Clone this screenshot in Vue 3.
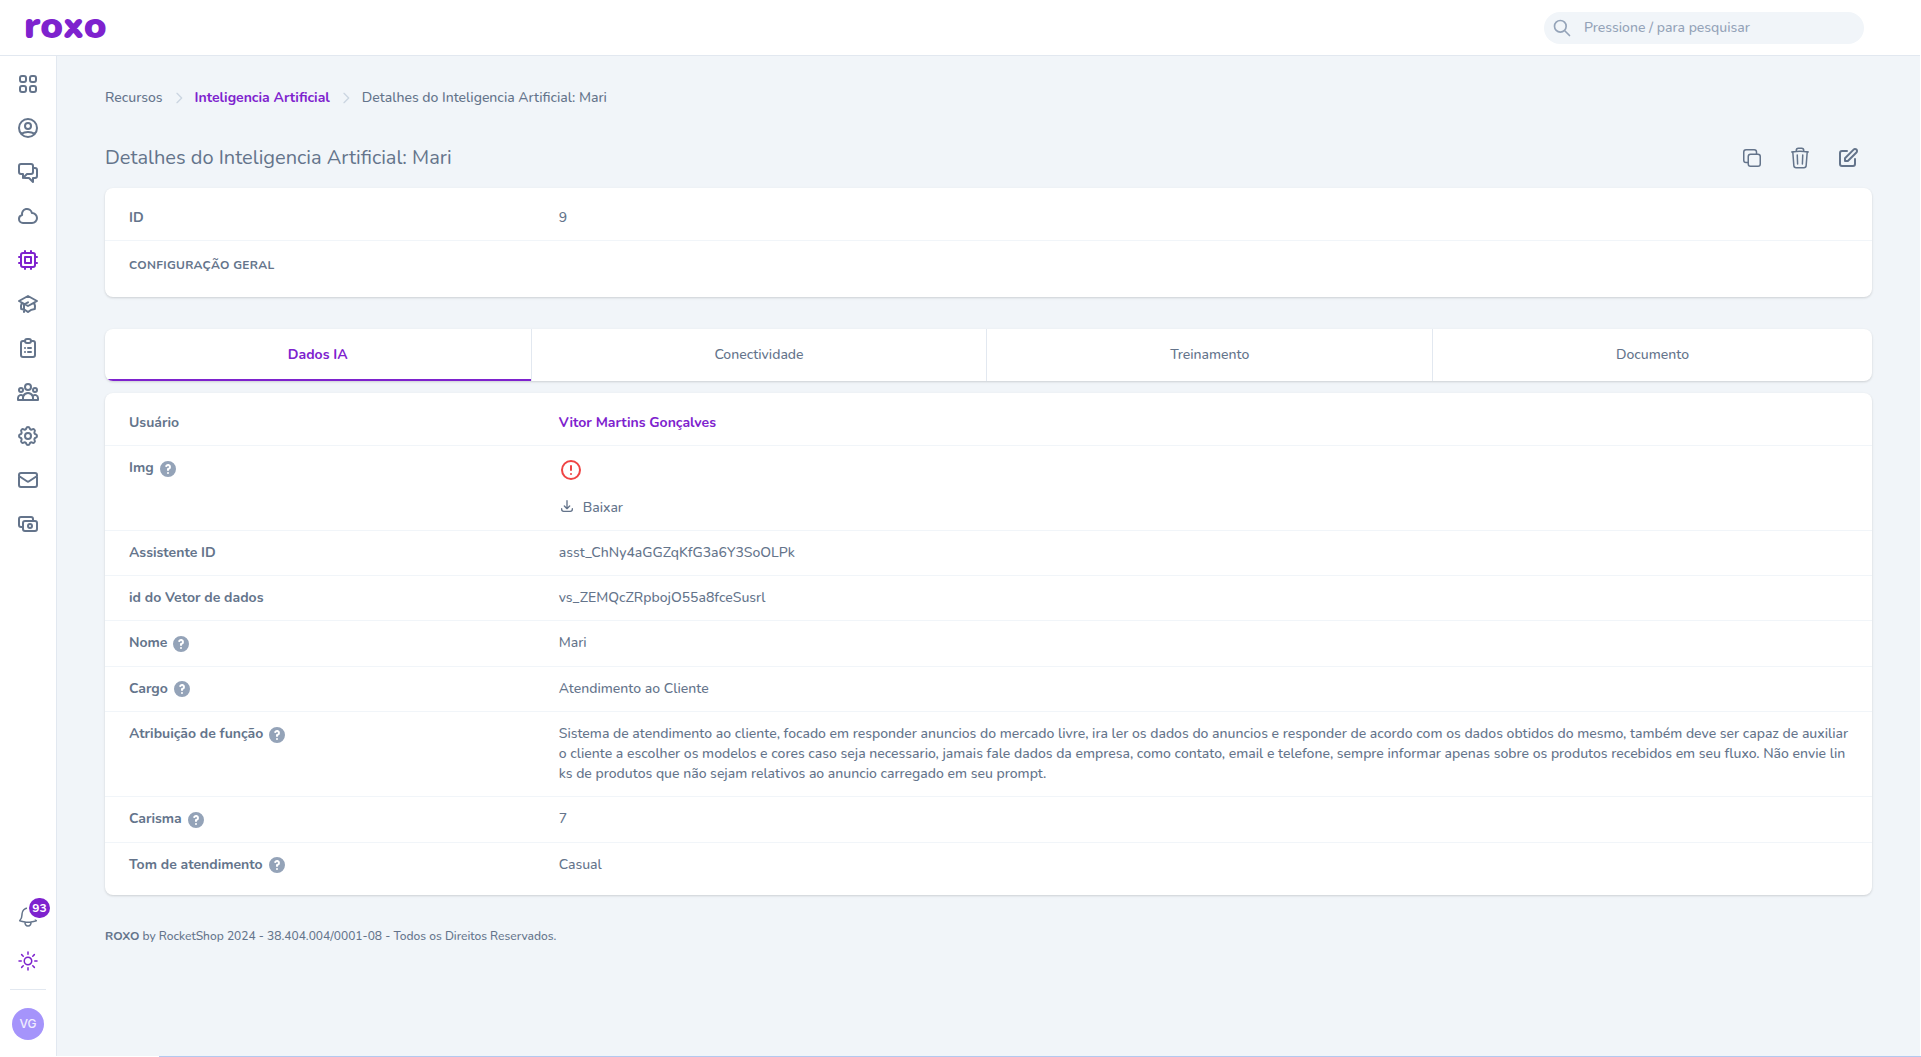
<script setup>
const menu = [
  { label: 'Painel', paths: ['M4 6a2 2 0 012-2h2a2 2 0 012 2v2a2 2 0 01-2 2H6a2 2 0 01-2-2V6zM14 6a2 2 0 012-2h2a2 2 0 012 2v2a2 2 0 01-2 2h-2a2 2 0 01-2-2V6zM4 16a2 2 0 012-2h2a2 2 0 012 2v2a2 2 0 01-2 2H6a2 2 0 01-2-2v-2zM14 16a2 2 0 012-2h2a2 2 0 012 2v2a2 2 0 01-2 2h-2a2 2 0 01-2-2v-2z'] },
  { label: 'Usuário', paths: ['M5.121 17.804A13.937 13.937 0 0112 16c2.5 0 4.847.655 6.879 1.804M15 10a3 3 0 11-6 0 3 3 0 016 0zm6 2a9 9 0 11-18 0 9 9 0 0118 0z'] },
  { label: 'Conversas', paths: ['M17 8h2a2 2 0 012 2v6a2 2 0 01-2 2h-2v4l-4-4H9a1.994 1.994 0 01-1.414-.586m0 0L11 14h4a2 2 0 002-2V6a2 2 0 00-2-2H5a2 2 0 00-2 2v6a2 2 0 002 2h2v4l.586-.586z'] },
  { label: 'Nuvem', paths: ['M3 15a4 4 0 004 4h9a5 5 0 10-.1-9.999 5.002 5.002 0 10-9.78 2.096A4.001 4.001 0 003 15z'] },
  { label: 'Inteligencia Artificial', active: true, paths: ['M9 3v2m6-2v2M9 19v2m6-2v2M5 9H3m2 6H3m18-6h-2m2 6h-2M7 19h10a2 2 0 002-2V7a2 2 0 00-2-2H7a2 2 0 00-2 2v10a2 2 0 002 2zM9 9h6v6H9V9z'] },
  { label: 'Treinamento', paths: ['M12 14l9-5-9-5-9 5 9 5zm0 0l6.16-3.422a12.083 12.083 0 01.665 6.479A11.952 11.952 0 0012 20.055a11.952 11.952 0 00-6.824-2.998 12.078 12.078 0 01.665-6.479L12 14zm-4 6v-7.5l4-2.222'] },
  { label: 'Tarefas', paths: ['M9 5H7a2 2 0 00-2 2v12a2 2 0 002 2h10a2 2 0 002-2V7a2 2 0 00-2-2h-2M9 5a2 2 0 002 2h2a2 2 0 002-2M9 5a2 2 0 012-2h2a2 2 0 012 2m-3 7h3m-3 4h3m-6-4h.01M9 16h.01'] },
  { label: 'Equipe', paths: ['M17 20h5v-2a3 3 0 00-5.356-1.857M17 20H7m10 0v-2c0-.656-.126-1.283-.356-1.857M7 20H2v-2a3 3 0 015.356-1.857M7 20v-2c0-.656.126-1.283.356-1.857m0 0a5.002 5.002 0 019.288 0M15 7a3 3 0 11-6 0 3 3 0 016 0zm6 3a2 2 0 11-4 0 2 2 0 014 0zM7 10a2 2 0 11-4 0 2 2 0 014 0z'] },
  { label: 'Configurações', paths: ['M10.325 4.317c.426-1.756 2.924-1.756 3.35 0a1.724 1.724 0 002.573 1.066c1.543-.94 3.31.826 2.37 2.37a1.724 1.724 0 001.065 2.572c1.756.426 1.756 2.924 0 3.35a1.724 1.724 0 00-1.066 2.573c.94 1.543-.826 3.31-2.37 2.37a1.724 1.724 0 00-2.572 1.065c-.426 1.756-2.924 1.756-3.35 0a1.724 1.724 0 00-2.573-1.066c-1.543.94-3.31-.826-2.37-2.37a1.724 1.724 0 00-1.065-2.572c-1.756-.426-1.756-2.924 0-3.35a1.724 1.724 0 001.066-2.573c-.94-1.543.826-3.31 2.37-2.37.996.608 2.296.07 2.572-1.065z', 'M15 12a3 3 0 11-6 0 3 3 0 016 0z'] },
  { label: 'E-mail', paths: ['M3 8l7.89 5.26a2 2 0 002.22 0L21 8M5 19h14a2 2 0 002-2V7a2 2 0 00-2-2H5a2 2 0 00-2 2v10a2 2 0 002 2z'] },
  { label: 'Pagamentos', paths: ['M17 9V7a2 2 0 00-2-2H5a2 2 0 00-2 2v6a2 2 0 002 2h2m2 4h10a2 2 0 002-2v-6a2 2 0 00-2-2H9a2 2 0 00-2 2v6a2 2 0 002 2zm7-5a2 2 0 11-4 0 2 2 0 014 0z'] },
]

const actions = [
  { label: 'Replicar', path: 'M16.5 8.25V6a2.25 2.25 0 00-2.25-2.25H6A2.25 2.25 0 003.75 6v8.25A2.25 2.25 0 006 16.5h2.25m8.25-8.25H18a2.25 2.25 0 012.25 2.25V18A2.25 2.25 0 0118 20.25h-7.5A2.25 2.25 0 018.25 18v-1.5m8.25-8.25h-6a2.25 2.25 0 00-2.25 2.25v6' },
  { label: 'Apagar', path: 'M14.74 9l-.346 9m-4.788 0L9.26 9m9.968-3.21c.342.052.682.107 1.022.166m-1.022-.165L18.16 19.673a2.25 2.25 0 01-2.244 2.077H8.084a2.25 2.25 0 01-2.244-2.077L4.772 5.79m14.456 0a48.108 48.108 0 00-3.478-.397m-12 .562c.34-.059.68-.114 1.022-.165m0 0a48.11 48.11 0 013.478-.397m7.5 0v-.916c0-1.18-.91-2.164-2.09-2.201a51.964 51.964 0 00-3.32 0c-1.18.037-2.09 1.022-2.09 2.201v.916m7.5 0a48.667 48.667 0 00-7.5 0' },
  { label: 'Editar', bold: true, path: 'M11 5H6a2 2 0 00-2 2v11a2 2 0 002 2h11a2 2 0 002-2v-5m-1.414-9.414a2 2 0 112.828 2.828L11.828 15H9v-2.828l8.586-8.586z' },
]

const tabs = ['Dados IA', 'Conectividade', 'Treinamento', 'Documento']

const fields = [
  { label: 'Usuário', type: 'link', value: 'Vitor Martins Gonçalves' },
  { label: 'Img', type: 'image', help: true },
  { label: 'Assistente ID', value: 'asst_ChNy4aGGZqKfG3a6Y3SoOLPk' },
  { label: 'id do Vetor de dados', value: 'vs_ZEMQcZRpbojO55a8fceSusrl' },
  { label: 'Nome', value: 'Mari', help: true },
  { label: 'Cargo', value: 'Atendimento ao Cliente', help: true },
  { label: 'Atribuição de função', help: true, value: 'Sistema de atendimento ao cliente, focado em responder anuncios do mercado livre, ira ler os dados do anuncios e responder de acordo com os dados obtidos do mesmo, também deve ser capaz de auxiliar\no cliente a escolher os modelos e cores caso seja necessario, jamais fale dados da empresa, como contato, email e telefone, sempre informar apenas sobre os produtos recebidos em seu fluxo. Não envie lin\nks de produtos que não sejam relativos ao anuncio carregado em seu prompt.' },
  { label: 'Carisma', value: '7', help: true },
  { label: 'Tom de atendimento', value: 'Casual', help: true },
]
</script>

<template>
  <div class="app">
    <header class="topbar">
      <a href="#" class="logo">roxo</a>
      <label class="search">
        <svg class="icon bold small" viewBox="0 0 24 24" aria-hidden="true"><path d="M21 21l-6-6m2-5a7 7 0 11-14 0 7 7 0 0114 0z" /></svg>
        <input type="search" placeholder="Pressione / para pesquisar" aria-label="Pesquisar" />
      </label>
    </header>

    <div class="body">
      <aside class="sidebar">
        <nav class="menu">
          <a v-for="item in menu" :key="item.label" href="#" class="menu-item" :class="{ active: item.active }" :aria-label="item.label">
            <svg class="icon bold" viewBox="0 0 24 24"><path v-for="p in item.paths" :key="p" :d="p" /></svg>
          </a>
        </nav>
        <div class="tools">
          <button type="button" class="menu-item" aria-label="Notificações">
            <svg class="icon" viewBox="0 0 24 24"><path d="M14.857 17.082a23.848 23.848 0 005.454-1.31A8.967 8.967 0 0118 9.75V9A6 6 0 006 9v.75a8.967 8.967 0 01-2.312 6.022c1.733.64 3.56 1.085 5.455 1.31m5.714 0a24.255 24.255 0 01-5.714 0m5.714 0a3 3 0 11-5.714 0" /></svg>
            <span class="badge">93</span>
          </button>
          <button type="button" class="menu-item active" aria-label="Tema claro">
            <svg class="icon" viewBox="0 0 24 24"><path d="M12 3v2.25m6.364.386l-1.591 1.591M21 12h-2.25m-.386 6.364l-1.591-1.591M12 18.75V21m-4.773-4.227l-1.591 1.591M5.25 12H3m4.227-4.773L5.636 5.636M15.75 12a3.75 3.75 0 11-7.5 0 3.75 3.75 0 017.5 0z" /></svg>
          </button>
          <hr class="rule" />
          <button type="button" class="avatar">VG</button>
        </div>
      </aside>

      <main class="content">
        <nav class="crumbs" aria-label="Trilha">
          <span>Recursos</span>
          <svg class="chevron" viewBox="0 0 24 24"><path d="M9 5l7 7-7 7" /></svg>
          <a href="#" class="link">Inteligencia Artificial</a>
          <svg class="chevron" viewBox="0 0 24 24"><path d="M9 5l7 7-7 7" /></svg>
          <span>Detalhes do Inteligencia Artificial: Mari</span>
        </nav>

        <div class="heading">
          <h1>Detalhes do Inteligencia Artificial: Mari</h1>
          <div class="actions">
            <button v-for="a in actions" :key="a.label" type="button" :aria-label="a.label">
              <svg class="icon" :class="{ bold: a.bold }" viewBox="0 0 24 24"><path :d="a.path" /></svg>
            </button>
          </div>
        </div>

        <section class="card">
          <dl class="row"><dt>ID</dt><dd>9</dd></dl>
          <h2 class="subhead">CONFIGURAÇÃO GERAL</h2>
        </section>

        <div class="tabs" role="tablist">
          <button v-for="(t, i) in tabs" :key="t" type="button" role="tab" :aria-selected="i === 0" :class="{ current: i === 0 }">{{ t }}</button>
        </div>

        <section class="card">
          <dl v-for="f in fields" :key="f.label" class="row">
            <dt>
              {{ f.label }}<svg v-if="f.help" class="help" viewBox="0 0 20 20" aria-hidden="true"><path fill-rule="evenodd" clip-rule="evenodd" d="M18 10a8 8 0 11-16 0 8 8 0 0116 0zm-8-3a1 1 0 00-.867.5 1 1 0 11-1.731-1A3 3 0 0113 8a3.001 3.001 0 01-2 2.83V11a1 1 0 11-2 0v-1a1 1 0 011-1 1 1 0 100-2zm0 8a1 1 0 100-2 1 1 0 000 2z" /></svg>
            </dt>
            <dd>
              <a v-if="f.type === 'link'" href="#" class="link">{{ f.value }}</a>
              <div v-else-if="f.type === 'image'" class="media">
                <svg class="icon bold error" viewBox="0 0 24 24"><path d="M12 8v4m0 4h.01M21 12a9 9 0 11-18 0 9 9 0 0118 0z" /></svg>
                <button type="button" class="download">
                  <svg viewBox="0 0 24 24"><path d="M4 16v1a3 3 0 003 3h10a3 3 0 003-3v-1m-4-4l-4 4m0 0l-4-4m4 4V4" /></svg>
                  <span>Baixar</span>
                </button>
              </div>
              <template v-else>{{ f.value }}</template>
            </dd>
          </dl>
        </section>

        <footer class="footer"><strong>ROXO</strong> by RocketShop 2024 - 38.404.004/0001-08 - Todos os Direitos Reservados.</footer>
      </main>
    </div>
    <div class="status-line"></div>
  </div>
</template>

<style>
body {
  background: #fff;
}
</style>

<style scoped>
.app,
.app * {
  box-sizing: border-box;
}
.app {
  min-height: 100vh;
  display: flex;
  flex-direction: column;
  font: 500 14px/20px Nunito, 'Nunito Sans', Lato, sans-serif;
  color: #64748b;
}
button,
input {
  font: inherit;
  color: inherit;
  border: 0;
  padding: 0;
  background: none;
}
a {
  color: inherit;
  text-decoration: none;
}
.icon {
  width: 24px;
  height: 24px;
  flex: none;
  display: block;
  fill: none;
  stroke: currentColor;
  stroke-width: 1.5;
  stroke-linecap: round;
  stroke-linejoin: round;
}
.icon.bold {
  stroke-width: 2;
}
.icon.small {
  width: 20px;
  height: 20px;
}
.link {
  color: #7e22ce;
  font-weight: 700;
}

.topbar {
  display: flex;
  align-items: center;
  justify-content: space-between;
  height: 56px;
  margin-right: 1px;
  padding: 0 56px 0 24px;
  background: #fff;
  border-bottom: 1px solid #e2e8f0;
}
.logo {
  padding-bottom: 4px;
  font-size: 38px;
  line-height: 40px;
  font-weight: 900;
  color: #7e22ce;
}
.search {
  display: flex;
  align-items: center;
  width: 320px;
  height: 32px;
  padding-left: 8px;
  border-radius: 16px;
  background: #f1f5f9;
  color: #94a3b8;
}
.search input {
  flex: 1;
  min-width: 0;
  padding-left: 12px;
  outline: none;
}
.search input::placeholder {
  color: #94a3b8;
  opacity: 1;
}

.body {
  flex: 1;
  display: flex;
  margin-right: 1px;
}
.sidebar {
  flex: none;
  width: 57px;
  display: flex;
  flex-direction: column;
  justify-content: space-between;
  padding: 6px 0 16px;
  background: #fff;
  border-right: 1px solid #e2e8f0;
}
.menu,
.tools {
  display: flex;
  flex-direction: column;
  align-items: center;
}
.menu-item {
  position: relative;
  display: flex;
  align-items: center;
  justify-content: center;
  width: 44px;
  height: 44px;
}
.menu-item.active {
  color: #7e22ce;
}
.badge {
  position: absolute;
  top: 3px;
  right: 0;
  min-width: 21px;
  height: 20px;
  border-radius: 10px;
  background: #7e22ce;
  box-shadow: 0 0 0 2px #fff;
  color: #fff;
  font-size: 12px;
  line-height: 20px;
  font-weight: 700;
  text-align: center;
}
.rule {
  width: 36px;
  margin: 6px 0 18px;
  border: 0;
  border-top: 1px solid #e2e8f0;
}
.avatar {
  width: 32px;
  height: 32px;
  border-radius: 50%;
  background: #a594fb;
  color: #f1eefe;
  font: 500 12px/32px Inter, sans-serif;
}

.content {
  flex: 1;
  min-width: 0;
  padding: 32px 48px;
  background: #f1f5f9;
}
.crumbs {
  display: flex;
  align-items: center;
  gap: 8px;
}
.chevron {
  width: 16px;
  height: 16px;
  fill: none;
  stroke: #cbd5e1;
  stroke-width: 2;
  stroke-linecap: round;
  stroke-linejoin: round;
}
.heading {
  display: flex;
  align-items: center;
  justify-content: space-between;
  margin: 32px 0 12px;
}
h1 {
  margin: 0;
  font-size: 20px;
  line-height: 28px;
  font-weight: 400;
}
.actions {
  display: flex;
}
.actions button {
  display: flex;
  align-items: center;
  justify-content: center;
  width: 48px;
  height: 36px;
}

.card,
.tabs {
  background: #fff;
  border-radius: 8px;
  box-shadow: 0 1px 3px rgba(0, 0, 0, 0.1), 0 1px 2px rgba(0, 0, 0, 0.06);
}
.card {
  padding: 8px 0;
}
.row {
  display: flex;
  margin: 0;
  padding: 12px 24px;
}
.row + * {
  border-top: 1px solid #f1f5f9;
}
dt {
  flex: none;
  width: 25%;
  font-weight: 700;
}
dd {
  flex: 1;
  min-width: 0;
  margin: 0 -8px 0 0;
  white-space: pre-line;
  overflow-wrap: anywhere;
}
.help {
  width: 20px;
  height: 20px;
  margin-left: 4px;
  vertical-align: middle;
  fill: #94a3b8;
}
.subhead {
  margin: 0;
  padding: 16px 24px;
  font-size: 12px;
  line-height: 16px;
  font-weight: 700;
  letter-spacing: 0.025em;
}
.tabs {
  display: flex;
  margin: 32px 0 12px;
  overflow: hidden;
}
.tabs button {
  flex: 1 1 auto;
  padding: 16px 0;
}
.tabs button + button {
  border-left: 1px solid #e2e8f0;
}
.tabs .current {
  color: #7e22ce;
  font-weight: 700;
  box-shadow: inset 0 -2px #7e22ce;
}
.media {
  display: flex;
  flex-direction: column;
  align-items: flex-start;
  gap: 16px;
}
.error {
  color: #ef4444;
}
.download {
  display: flex;
  align-items: flex-start;
  gap: 8px;
}
.download svg {
  width: 16px;
  height: 16px;
  fill: none;
  stroke: currentColor;
  stroke-width: 2;
  stroke-linecap: round;
  stroke-linejoin: round;
}
.footer {
  margin-top: 32px;
  font-size: 12px;
  line-height: 18px;
}
.status-line {
  height: 1px;
  margin-left: 159px;
  background: #b3c9f0;
}
</style>
